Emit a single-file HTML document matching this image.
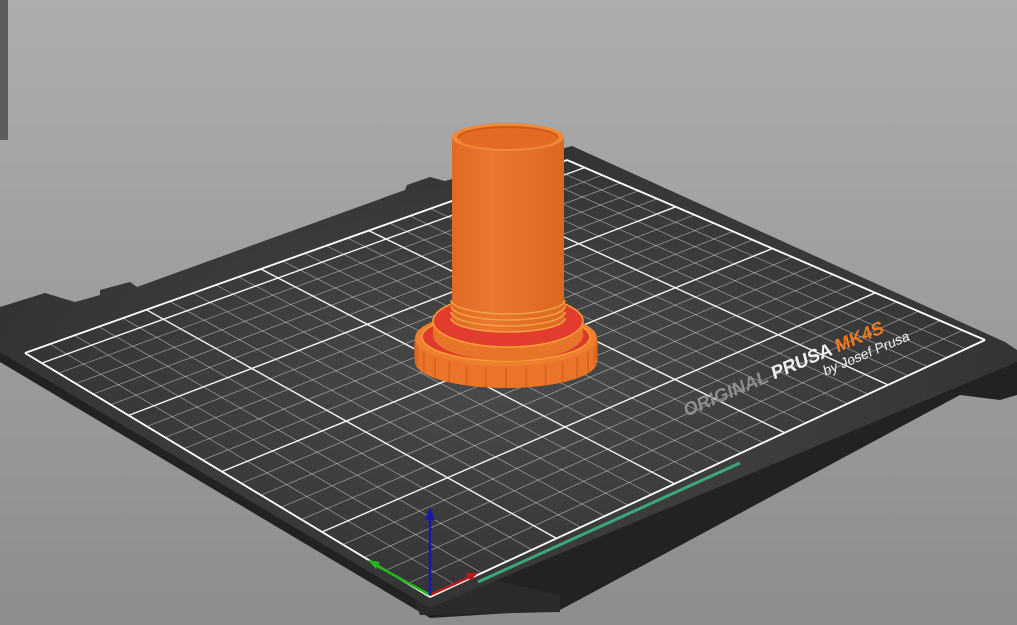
<!DOCTYPE html>
<html><head><meta charset="utf-8"><style>
html,body{margin:0;padding:0;width:1017px;height:625px;overflow:hidden;background:#a0a0a0}
svg{display:block}
</style></head><body>
<svg id="s" width="1017" height="625" viewBox="0 0 1017 625" xmlns="http://www.w3.org/2000/svg">
<defs>
<linearGradient id="bg" x1="0" y1="0" x2="0" y2="1"><stop offset="0" stop-color="#adadad"/><stop offset="1" stop-color="#8d8d8d"/></linearGradient>
<radialGradient id="pl" cx="0.5" cy="0.5" r="0.6"><stop offset="0" stop-color="#4a4a4a"/><stop offset="1" stop-color="#2f2f2f"/></radialGradient>
<linearGradient id="cyl" x1="0" y1="0" x2="1" y2="0"><stop offset="0" stop-color="#e06a22"/><stop offset="0.35" stop-color="#ea7630"/><stop offset="1" stop-color="#dc6820"/></linearGradient>
</defs>
<rect width="1017" height="625" fill="url(#bg)"/>
<rect x="0" y="0" width="8" height="140" fill="#5c5c5c"/>
<polygon points="0,350 430,606 1017,360 1017,395 1000,400 960,395 560,610 430,618 0,362" fill="#222"/>
<polygon points="400,560 420,615 560,612 560,595" fill="#2a2a2a"/>
<polygon points="0,307 45,293 75,302 100,295 100,290 130,282 137,287 405,190 407,185 430,177 445,181 572,146 1005,342 1017,350 1017,362 430,608 0,352" fill="url(#pl)"/>
<g id="grid"></g>
<line x1="478" y1="582" x2="740" y2="463" stroke="#3aa87a" stroke-width="3"/>
<line x1="430" y1="595" x2="372" y2="563" stroke="#1cb81c" stroke-width="2.5"/>
<polygon points="368,560 380,562 376,569" fill="#1cb81c"/>
<line x1="430" y1="595" x2="472" y2="576" stroke="#c01818" stroke-width="2.5"/>
<polygon points="478,573 466,573 470,581" fill="#c01818"/>
<line x1="430" y1="595" x2="430" y2="518" stroke="#1818b0" stroke-width="2.5"/>
<polygon points="430,507 425,520 435,520" fill="#1818b0"/>
<g transform="translate(686,417) rotate(-23) skewX(-8)" font-family="Liberation Sans, sans-serif" font-weight="bold" font-size="18.5">
<text x="0" y="0"><tspan fill="#8e8e8e">ORIGINAL </tspan><tspan fill="#f2f2f2">PRUSA </tspan><tspan fill="#f07a22">MK4S</tspan></text>
</g>
<g transform="translate(825,376) rotate(-23) skewX(-8)" font-family="Liberation Sans, sans-serif" font-size="14" fill="#eee">
<text x="0" y="0">by Josef Prusa</text>
</g>
<!-- gear -->
<path d="M415,338 L415,362 A91,26 0 0 0 597,362 L597,338 Z" fill="#ea7428"/>
<g id="teeth"></g>
<ellipse cx="506" cy="338" rx="91" ry="28" fill="#f07e30"/>
<ellipse cx="506" cy="337" rx="84" ry="24" fill="#e03a2e" stroke="#f5a030" stroke-width="1.5"/>
<!-- flange -->
<path d="M433,321 L433,335 A75,26 0 0 0 583,335 L583,321 Z" fill="#e8742a"/>
<ellipse cx="508" cy="321" rx="75" ry="26" fill="#e23c2e" stroke="#f5a030" stroke-width="1.5"/>
<!-- cylinder -->
<path d="M452,137 L452,318 A56,14 0 0 0 564,318 L564,137 Z" fill="url(#cyl)"/>
<g stroke="#f0a040" stroke-width="1.6" fill="none">
<path d="M451,300 A57,14 0 0 0 565,300"/>
<path d="M451,306 A57,14 0 0 0 565,306"/>
<path d="M451,312 A57,14 0 0 0 565,312"/>
<path d="M451,318 A57,14 0 0 0 565,318"/>
</g>
<ellipse cx="508" cy="137" rx="56" ry="14" fill="#f08a38"/>
<ellipse cx="508" cy="138" rx="50" ry="11" fill="#e26a22"/>
<path d="M458,138 A50,11 0 0 1 558,138" fill="none" stroke="#d05a18" stroke-width="2"/>
</svg>
<script>
(function(){
var x0=430,y0=597,x1=985,y1=340,x2=567,y2=160,x3=25,y3=353;
var sx=x0-x1+x2-x3,sy=y0-y1+y2-y3,dx1=x1-x2,dx2=x3-x2,dy1=y1-y2,dy2=y3-y2;
var den=dx1*dy2-dx2*dy1;
var g=(sx*dy2-dx2*sy)/den,h=(dx1*sy-sx*dy1)/den;
var a=x1-x0+g*x1,b=x3-x0+h*x3,c=x0,d=y1-y0+g*y1,e=y3-y0+h*y3,f=y0;
function P(u,v){var w=g*u+h*v+1;return [(a*u+b*v+c)/w,(d*u+e*v+f)/w];}
var s='';
function L(p,q,w,o){s+='<line x1="'+p[0].toFixed(1)+'" y1="'+p[1].toFixed(1)+'" x2="'+q[0].toFixed(1)+'" y2="'+q[1].toFixed(1)+'" stroke="#fff" stroke-width="'+w+'" stroke-opacity="'+o+'"/>';}
for(var i=0;i<=25;i++){var u=i/25;var m=(i%5==0);L(P(u,0),P(u,1),m?1.4:0.7,m?0.95:0.5);}
for(var j=0;j<=21;j++){var v=j/21;var m=(j%5==0)||j==21;L(P(0,v),P(1,v),m?1.4:0.7,m?0.95:0.5);}
L(P(0,0),P(1,0),1.8,1);L(P(1,0),P(1,1),1.8,1);L(P(0,1),P(1,1),1.8,1);L(P(0,0),P(0,1),1.8,1);
document.getElementById('grid').innerHTML=s;
var t='';
for(var k=0;k<28;k++){var an=k/28*Math.PI*2;var x=506+91*Math.cos(an),y=338+28*Math.sin(an);
if(Math.sin(an)>-0.1){t+='<line x1="'+x.toFixed(1)+'" y1="'+(y+2).toFixed(1)+'" x2="'+x.toFixed(1)+'" y2="'+(y+22).toFixed(1)+'" stroke="#d0601c" stroke-width="2" stroke-opacity="0.7"/>';}}
document.getElementById('teeth').innerHTML=t;
})();
</script>
</body></html>
